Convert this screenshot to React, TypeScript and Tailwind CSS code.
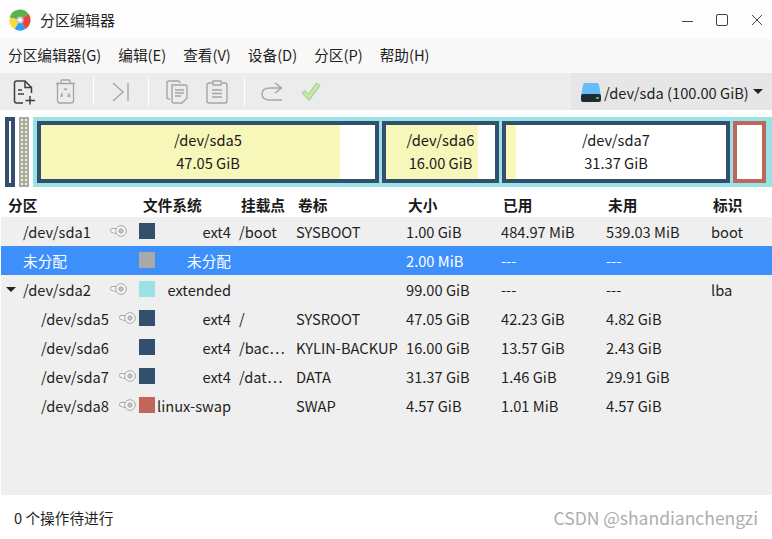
const font = { fontFamily: '"Noto Sans CJK SC", "Noto Sans", sans-serif' }

interface Row {
  name: string
  indent: number
  key?: boolean
  expander?: boolean
  swatch: string
  fs: string
  mount?: string
  label?: string
  size: string
  used?: string
  unused?: string
  flags?: string
  selected?: boolean
}

const rows: Row[] = [
  { name: '/dev/sda1', indent: 23, key: true, swatch: 'bg-[#324f6e]', fs: 'ext4', mount: '/boot', label: 'SYSBOOT', size: '1.00 GiB', used: '484.97 MiB', unused: '539.03 MiB', flags: 'boot' },
  { name: '未分配', indent: 23, swatch: 'bg-[#a9a9a9]', fs: '未分配', size: '2.00 MiB', used: '---', unused: '---', selected: true },
  { name: '/dev/sda2', indent: 23, key: true, expander: true, swatch: 'bg-[#99e3e6]', fs: 'extended', size: '99.00 GiB', used: '---', unused: '---', flags: 'lba' },
  { name: '/dev/sda5', indent: 41, key: true, swatch: 'bg-[#324f6e]', fs: 'ext4', mount: '/', label: 'SYSROOT', size: '47.05 GiB', used: '42.23 GiB', unused: '4.82 GiB' },
  { name: '/dev/sda6', indent: 41, swatch: 'bg-[#324f6e]', fs: 'ext4', mount: '/bac…', label: 'KYLIN-BACKUP', size: '16.00 GiB', used: '13.57 GiB', unused: '2.43 GiB' },
  { name: '/dev/sda7', indent: 41, key: true, swatch: 'bg-[#324f6e]', fs: 'ext4', mount: '/dat…', label: 'DATA', size: '31.37 GiB', used: '1.46 GiB', unused: '29.91 GiB' },
  { name: '/dev/sda8', indent: 41, key: true, swatch: 'bg-[#c0665c]', fs: 'linux-swap', label: 'SWAP', size: '4.57 GiB', used: '1.01 MiB', unused: '4.57 GiB' },
]

const menus = ['分区编辑器(G)', '编辑(E)', '查看(V)', '设备(D)', '分区(P)', '帮助(H)']

function AppLogo() {
  return (
    <svg width="24" height="24" viewBox="0 0 24 24">
      <path d="M12 12 L1.8 9.5 A10.5 10.5 0 0 1 20.5 5.8 Z" fill="#5cb04f" />
      <path d="M12 12 L20.5 5.8 A10.5 10.5 0 0 1 17.5 21 Z" fill="#e8453c" />
      <path d="M12 12 L17.5 21 A10.5 10.5 0 0 1 6.5 21 Z" fill="#2f9df0" />
      <path d="M12 12 L6.5 21 A10.5 10.5 0 0 1 1.8 9.5 Z" fill="#f6dc3c" />
      <circle cx="12" cy="12" r="3.6" fill="#c9c9c9" />
      <circle cx="12" cy="12" r="1.8" fill="#ffffff" />
    </svg>
  )
}

function KeyIcon() {
  return (
    <svg width="17" height="12" viewBox="0 0 17 12" fill="none" stroke="#a8a8a8" strokeWidth="1">
      <path d="M6.5 3.5 H2 Q0.5 3.5 0.5 5.5 Q0.5 7.5 2 7.5 H3 L4 8.5 L6.5 8" fill="#f6f6f6" />
      <circle cx="11" cy="6" r="5.3" fill="#f6f6f6" />
      <circle cx="11" cy="6" r="2.2" fill="#c4c4c4" />
    </svg>
  )
}

function ToolbarIcons() {
  return (
    <div className="flex h-[37px] items-center">
      <svg className="ml-[13px]" width="23" height="26" viewBox="0 0 23 26" fill="none" stroke="#3f3f3f" strokeWidth="1.5">
        <path d="M10 24 H3.5 Q1.5 24 1.5 22 V4 Q1.5 2 3.5 2 H12 L18.5 8.5 V14" />
        <path d="M12 2 V8.5 H18.5" />
        <path d="M5 11 H9 M5 15 H11" />
        <path d="M17 17 V25.5 M12.5 21.5 H22" />
      </svg>
      <svg className="ml-[19px]" width="21" height="25" viewBox="0 0 21 25" fill="none" stroke="#a5a5a5" strokeWidth="1.3">
        <path d="M1 4.5 H20 M6 4.5 V2 Q6 1 7 1 H14 Q15 1 15 2 V4.5" />
        <path d="M2.5 4.5 V21.5 Q2.5 24 5 24 H16 Q18.5 24 18.5 21.5 V4.5" />
        <path d="M9 11 L10.5 9.5 L12 11 M13.5 14 L15 17 H12 M8 17 H6 L7.5 14" />
      </svg>
      <div className="ml-[17px] h-[29px] w-px bg-white" />
      <svg className="ml-[18px]" width="18" height="20" viewBox="0 0 18 20" fill="none" stroke="#a5a5a5" strokeWidth="1.4">
        <path d="M1 1 L11 10 L1 19" />
        <path d="M16 1 V19" />
      </svg>
      <div className="ml-[18px] h-[29px] w-px bg-white" />
      <svg className="ml-[17px]" width="22" height="26" viewBox="0 0 22 26" fill="none" stroke="#a5a5a5" strokeWidth="1.4">
        <path d="M4 20 H3 Q1 20 1 18 V4 Q1 2 3 2 H12 Q14 2 14 4" />
        <path d="M6 6 H19 Q21 6 21 8 V19 L16 24 H8 Q6 24 6 22 Z" />
        <path d="M9 11 H18 M9 14 H18 M9 17 H15" />
      </svg>
      <svg className="ml-[18px]" width="22" height="26" viewBox="0 0 22 26" fill="none" stroke="#a5a5a5" strokeWidth="1.4">
        <path d="M6 4 H3 Q1 4 1 6 V22 Q1 24 3 24 H19 Q21 24 21 22 V6 Q21 4 19 4 H16" />
        <path d="M7 2 H15 V6 H7 Z" />
        <path d="M6 11 H16 M6 14.5 H16 M6 18 H16" />
      </svg>
      <div className="ml-[16px] h-[29px] w-px bg-white" />
      <svg className="ml-[16px]" width="22" height="20" viewBox="0 0 22 20" fill="none" stroke="#a5a5a5" strokeWidth="1.4">
        <path d="M21 18 H9 Q1 18 1 12 Q1 6 9 6 H20" />
        <path d="M14 1 L20.5 6 L14 11" />
      </svg>
      <svg className="ml-[18px]" width="20" height="20" viewBox="0 0 20 20">
        <path d="M1 11 L4 8.5 L7.5 12 L15.5 1 L19 3.5 L8 18.5 Z" fill="#c4e8a8" stroke="#9cc888" strokeWidth="1" />
      </svg>
    </div>
  )
}

function Partition({ name, size, width, used, color = 'border-[#324f6e]' }: { name?: string; size?: string; width: string; used: string; color?: string }) {
  return (
    <div className={`relative h-full border-4 bg-white ${color} ${width}`}>
      <div className="absolute inset-y-0 left-0 bg-[#f7f7b9]" style={{ width: used }} />
      {name && (
        <div className="relative flex h-full flex-col items-center justify-center pb-[2px] text-[14.67px] leading-[23px] text-[#1a1a1a]">
          <span>{name}</span>
          <span>{size}</span>
        </div>
      )}
    </div>
  )
}

export default function App() {
  return (
    <div className="relative flex h-[539px] w-[772px] flex-col overflow-hidden bg-white text-[14.67px] text-[#1f1f1f]" style={font}>
      {/* Title bar */}
      <div className="flex h-[39px] items-center bg-[#fdfdfd] pl-[8px]">
        <AppLogo />
        <span className="ml-[8px] pt-[2px] text-[15px]">分区编辑器</span>
        <div className="ml-auto flex items-center gap-[22px] pr-[9px]">
          <svg width="11" height="12" viewBox="0 0 11 12" stroke="#444" strokeWidth="1"><path d="M0 7.5 H11" /></svg>
          <svg width="14" height="14" viewBox="0 0 14 14" fill="none" stroke="#444" strokeWidth="1"><rect x="1.5" y="1.5" width="11" height="11" rx="1.5" /></svg>
          <svg width="12" height="12" viewBox="0 0 12 12" stroke="#444" strokeWidth="1"><path d="M1 1 L11 11 M11 1 L1 11" /></svg>
        </div>
      </div>

      {/* Menu bar */}
      <div className="flex h-[34px] items-center gap-[17px] bg-[#f8f8f8] pb-[2px] pl-[8px]">
        {menus.map(menu => (
          <span key={menu}>{menu}</span>
        ))}
      </div>

      {/* Toolbar */}
      <div className="flex h-[37px] bg-[#ececec]">
        <ToolbarIcons />
        <div className="ml-auto flex w-[201px] items-center bg-[#e6e6e6] pl-[10px]">
          <svg width="20" height="20" viewBox="0 0 20 20">
            <path d="M4 1 H16 Q17.5 1 18 3 L20 14 H0 L2 3 Q2.5 1 4 1 Z" fill="#66bdfb" />
            <rect x="0" y="12" width="20" height="8" rx="2" fill="#1f2a33" />
            <rect x="15" y="15" width="3" height="2" fill="#35c24b" />
          </svg>
          <span className="ml-[3px] pt-[3px]">/dev/sda (100.00 GiB)</span>
          <span className="ml-[4px] h-0 w-0 border-x-[5px] border-t-[5px] border-x-transparent border-t-[#222]" />
        </div>
      </div>

      {/* Disk map */}
      <div className="mt-[7px] flex h-[70px] pl-[5px]">
        <div className="h-full w-[10px] border-4 border-[#324f6e] bg-white" />
        <div className="ml-[4px] h-full w-[10px] border-2 border-[#a9a9a9] bg-[#a9a9a9]">
          <div className="h-full border-x-[2px] border-dotted border-[#f7f7b9]" />
        </div>
        <div className="ml-[4px] flex h-full w-[739px] gap-[3px] border-4 border-[#99e3e6] bg-[#99e3e6]">
          <Partition name="/dev/sda5" size="47.05 GiB" width="w-[342px]" used="89.5%" />
          <Partition name="/dev/sda6" size="16.00 GiB" width="w-[117px]" used="84.4%" />
          <Partition name="/dev/sda7" size="31.37 GiB" width="w-[228px]" used="4.5%" />
          <Partition width="w-[33px]" used="0" color="border-[#c0665c]" />
        </div>
      </div>

      {/* Table header */}
      <div className="mt-[6px] flex h-[24px] items-center font-bold text-[#1a1a1a]">
        <div className="w-[143px] pl-[8px]">分区</div>
        <div className="w-[98px]">文件系统</div>
        <div className="w-[57px]">挂载点</div>
        <div className="w-[110px]">卷标</div>
        <div className="w-[95px]">大小</div>
        <div className="w-[105px]">已用</div>
        <div className="w-[105px]">未用</div>
        <div>标识</div>
      </div>

      {/* Table body */}
      <div className="ml-px flex-1 bg-[#efefef]">
        {rows.map(row => (
          <div key={row.name} className={`flex h-[29px] items-center ${row.selected ? 'bg-[#3d8ffb] text-white' : ''}`}>
            <div className="relative flex w-[138px] items-center" style={{ paddingLeft: row.indent - 1 }}>
              {row.expander && (
                <span className="absolute left-[5px] top-[8px] h-0 w-0 border-x-[5px] border-t-[5px] border-x-transparent border-t-[#222]" />
              )}
              <span>{row.name}</span>
              {row.key && (
                <span className={row.indent > 30 ? 'absolute left-[118px] top-[4px]' : 'absolute left-[109px] top-[4px]'}>
                  <KeyIcon />
                </span>
              )}
            </div>
            <div className={`mb-[1px] h-[16px] w-[16px] shrink-0 ${row.swatch}`} />
            <div className="w-[76px] whitespace-nowrap text-right">{row.fs}</div>
            <div className="ml-[8px] w-[57px]">{row.mount}</div>
            <div className="w-[110px] whitespace-nowrap">{row.label}</div>
            <div className="w-[95px]">{row.size}</div>
            <div className="w-[105px]">{row.used}</div>
            <div className="w-[105px]">{row.unused}</div>
            <div>{row.flags}</div>
          </div>
        ))}
      </div>

      {/* Status bar */}
      <div className="flex h-[44px] items-center justify-between px-[14px] pt-[2px]">
        <span>0 个操作待进行</span>
        <span className="text-[17.5px] text-[#adadad]">CSDN @shandianchengzi</span>
      </div>
    </div>
  )
}
